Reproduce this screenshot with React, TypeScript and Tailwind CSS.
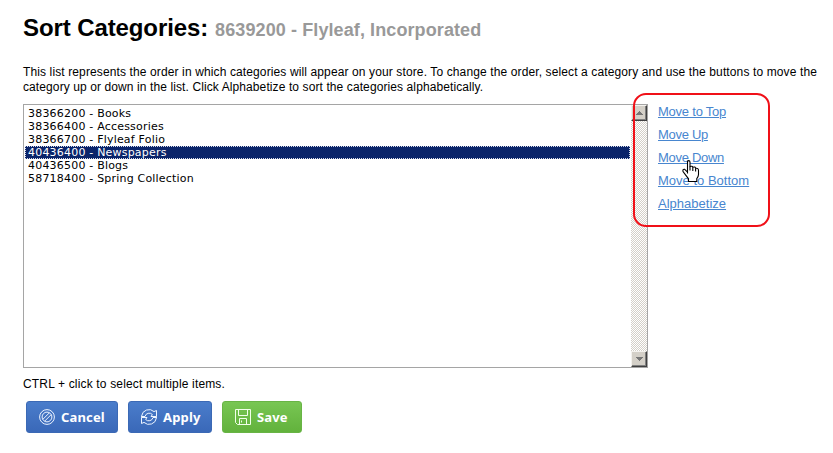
import type { ReactNode } from "react";

const categories = [
  "38366200 - Books",
  "38366400 - Accessories",
  "38366700 - Flyleaf Folio",
  "40436400 - Newspapers",
  "40436500 - Blogs",
  "58718400 - Spring Collection",
];

const selected = 3;

const actions = [
  { label: "Move to Top", spacing: "tracking-[-0.23px]" },
  { label: "Move Up", spacing: "tracking-[-0.3px]" },
  { label: "Move Down", spacing: "tracking-[-0.3px]" },
  { label: "Move to Bottom", spacing: "tracking-[0.01px]" },
  { label: "Alphabetize", spacing: "tracking-[0.01px]" },
];

function ScrollArrow({ down = false }: { down?: boolean }) {
  return (
    <div className="flex h-4 w-4 items-center justify-center border border-t-[#f4f2ee] border-l-[#f4f2ee] border-r-[#404040] border-b-[#404040] bg-[#d4d0c8] shadow-[inset_-1px_-1px_0_#808080]">
      <svg width="7" height="4" viewBox="0 0 7 4" shapeRendering="crispEdges">
        <path d={down ? "M0 0h7L3.5 4z" : "M0 4h7L3.5 0z"} fill="#777" />
      </svg>
    </div>
  );
}

function CategoryList() {
  return (
    <div className="flex h-[264px] w-[625px] border border-[#a5a5a5] bg-white">
      <ul className="flex-1 pt-[2px] pl-px pr-px font-['DejaVu_Sans',sans-serif] text-[11px] leading-[13px] tracking-[0.2px] text-black">
        {categories.map((name, i) => (
          <li
            key={name}
            className={
              i === selected
                ? "h-[13px] whitespace-nowrap bg-[#0a246a] pl-[3px] text-white outline-1 -outline-offset-1 outline-dotted outline-[#d8dcea]"
                : "h-[13px] whitespace-nowrap pl-[3px]"
            }
          >
            {name}
          </li>
        ))}
      </ul>
      <div className="flex w-4 flex-col justify-between bg-[repeating-conic-gradient(#d4d0c8_0_25%,#ffffff_0_50%)] bg-[length:2px_2px]">
        <ScrollArrow />
        <ScrollArrow down />
      </div>
    </div>
  );
}

function HandCursor() {
  return (
    <svg className="absolute top-[160px] left-[682px]" width="18" height="23" viewBox="0 0 18 23">
      <path
        d="M5.5 13.5V2Q5.5.6 6.7.6T8 2V6.5Q10.5 5.6 10.8 7.3Q13.3 6.3 13.6 8.3Q16.5 7.8 16.5 10.5V14.5Q16.5 16.5 14.8 18.5V21.5H6.5V18.8L1 11.5Q.4 8.8 2.8 9.4L5.5 12.2"
        fill="white"
        stroke="black"
        strokeWidth="1.1"
      />
      <path d="M8 6.5V10.5M10.8 7.5V11M13.6 8.5V11.5" fill="none" stroke="black" strokeWidth="1.1" />
    </svg>
  );
}

function CancelIcon() {
  return (
    <svg width="16" height="16" viewBox="0 0 16 16" fill="none" stroke="#edf4ff">
      <circle cx="8" cy="8" r="7.4" />
      <circle cx="8" cy="8" r="4.9" />
      <path d="M3.9 10.3 10.3 3.9M5.7 12.1 12.1 5.7" />
    </svg>
  );
}

function ApplyIcon() {
  return (
    <svg width="16" height="16" viewBox="0 0 16 16" fill="none" stroke="#edf4ff">
      <path d="M.6 8.5V7A7.4 7.4 0 0 1 13 2.6L15.5 1.5V7.5H10L11.4 5.6A4.3 4.3 0 0 0 4 7.5H.6" />
      <path d="M15.4 7.5V9A7.4 7.4 0 0 1 3 13.4L.5 14.5V8.5H6L4.6 10.4A4.3 4.3 0 0 0 12 8.5H15.4" />
    </svg>
  );
}

function SaveIcon() {
  return (
    <svg width="16" height="16" viewBox="0 0 16 16" fill="none" stroke="#f0ffe9">
      <path d="M.5.5H15.5V15.5H2.5L.5 13.5ZM3.5.5V6.5H12.5V.5M4.5 15.5V9.5H11.5V15.5M6.5 11.5V13.5" />
    </svg>
  );
}

function Button({ icon, label, look }: { icon: ReactNode; label: string; look: string }) {
  return (
    <button
      className={`flex h-8 items-center rounded-[3px] border pl-3 font-['Noto_Sans',sans-serif] text-[13px] font-bold tracking-[0.15px] text-white ${look}`}
    >
      {icon}
      <span className="ml-[6px] pt-[2px] whitespace-nowrap">{label}</span>
    </button>
  );
}

const blue = "border-[#3b69b5] bg-linear-to-b from-[#4a7dcb] to-[#3a68b8]";
const green = "border-[#68b445] bg-linear-to-b from-[#78c653] to-[#62b23c]";

export default function App() {
  return (
    <main className="relative h-[453px] w-[833px] overflow-hidden bg-white pl-[23px] font-['Liberation_Sans',Arial,sans-serif] text-black">
      <h1 className="flex h-[65px] items-baseline pt-[10px] font-bold whitespace-nowrap">
        <span className="text-[24px] leading-9 tracking-[-0.1px]">Sort Categories:</span>
        <span className="ml-[7px] text-[18px] leading-9 tracking-[0.1px] text-[#999]">
          8639200 - Flyleaf, Incorporated
        </span>
      </h1>
      <p className="h-[39px] text-[12px] leading-[15px] whitespace-nowrap">
        <span className="block tracking-[0.12px]">
          This list represents the order in which categories will appear on your store. To change the order, select a category and use the buttons to move the
        </span>
        <span className="block tracking-[0.1px]">
          category up or down in the list. Click Alphabetize to sort the categories alphabetically.
        </span>
      </p>
      <div className="flex">
        <CategoryList />
        <nav className="-mt-1 ml-[10px] flex flex-col items-start text-[13px] leading-[23px]">
          {actions.map((a) => (
            <a key={a.label} href="#" className={`whitespace-nowrap text-[#4886cf] underline ${a.spacing}`}>
              {a.label}
            </a>
          ))}
        </nav>
      </div>
      <p className="mt-[9px] h-6 text-[12px] leading-[15px] tracking-[0.16px]">CTRL + click to select multiple items.</p>
      <div className="flex gap-[10px] pl-[3px]">
        <Button icon={<CancelIcon />} label="Cancel" look={`w-[92px] ${blue}`} />
        <Button icon={<ApplyIcon />} label="Apply" look={`w-[84px] ${blue}`} />
        <Button icon={<SaveIcon />} label="Save" look={`w-[80px] ${green}`} />
      </div>
      <div className="pointer-events-none absolute top-[93px] left-[633px] h-[134px] w-[137px] rounded-[13px] border-2 border-[#f01018]" />
      <HandCursor />
    </main>
  );
}
